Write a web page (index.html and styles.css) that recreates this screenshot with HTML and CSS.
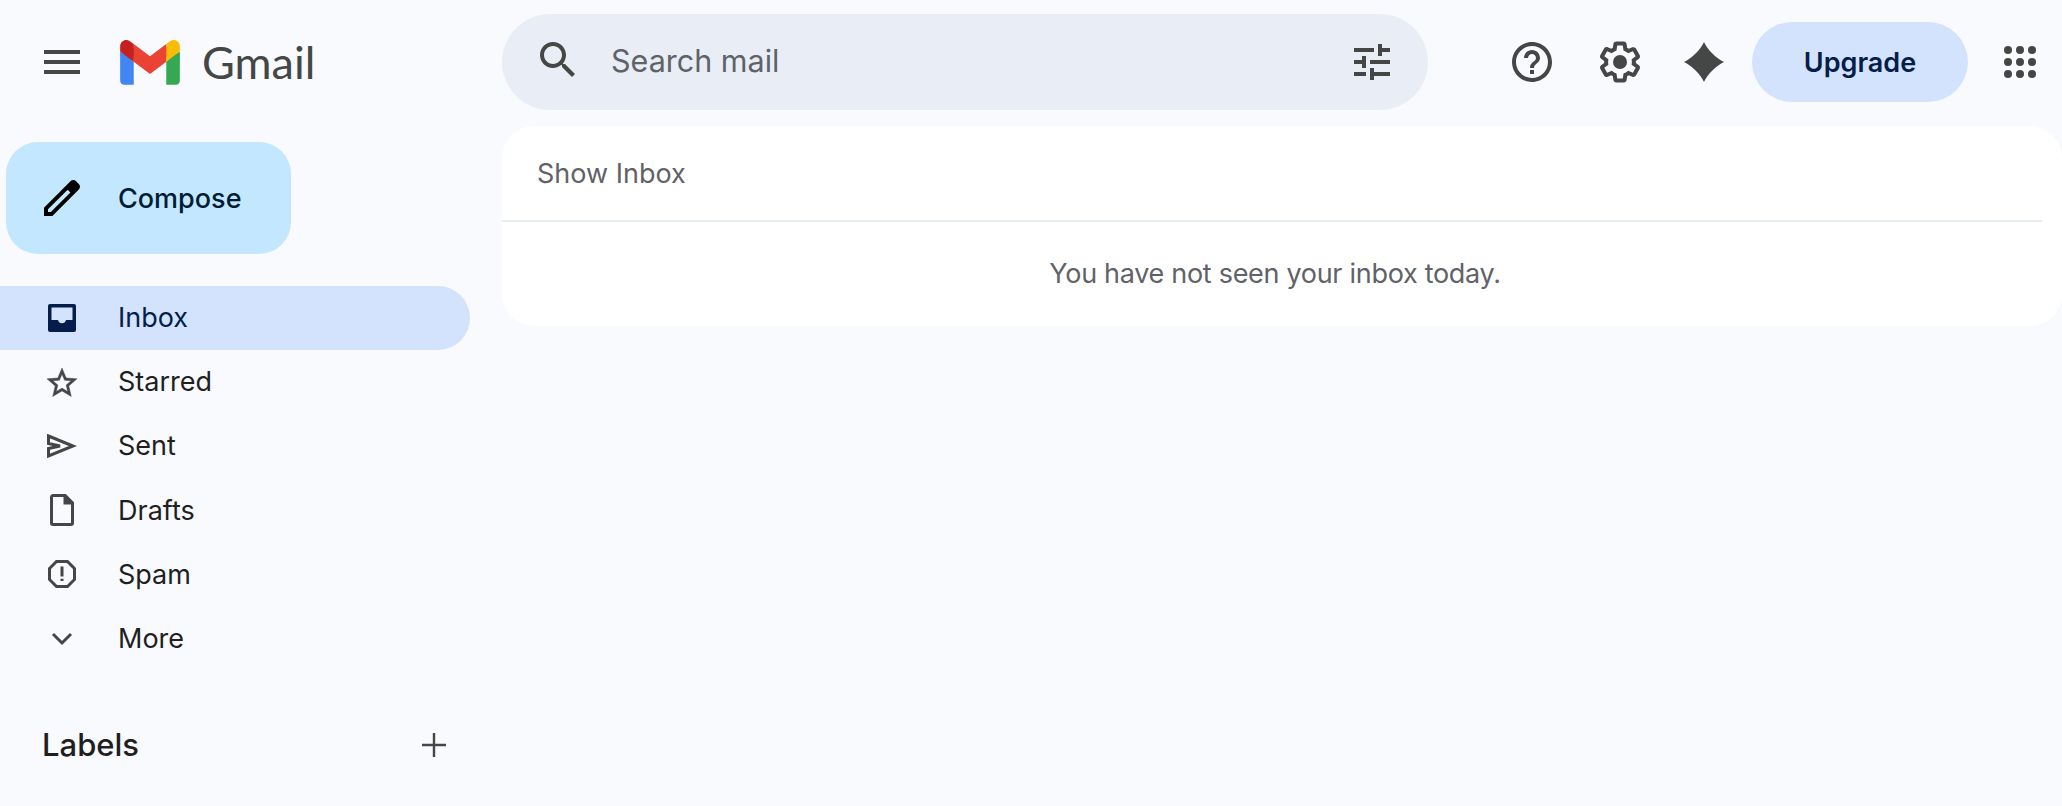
FILE: index.html
```html
<!DOCTYPE html>
<html lang="en">
<head>
  <meta charset="UTF-8" />
  <title>Inbox - Gmail</title>
  <link rel="stylesheet" href="styles.css">
</head>
<body>

<div class="app">
  <aside class="sidebar">
    <div class="brand">
      <svg class="menu-icon" viewBox="0 0 24 24"><path d="M3 18h18v-2H3v2zm0-5h18v-2H3v2zm0-7v2h18V6H3z"/></svg>
      <svg class="logo" viewBox="0 0 256 193">
        <path fill="#4285F4" d="M58.182 192.05V93.14L27.507 65.077 0 49.504v125.091c0 9.658 7.825 17.455 17.455 17.455h40.727Z"/>
        <path fill="#34A853" d="M197.818 192.05h40.727c9.659 0 17.455-7.826 17.455-17.455V49.505l-31.156 17.837-27.026 25.798v98.91Z"/>
        <path fill="#EA4335" d="m58.182 93.14-4.174-38.647 4.174-36.989L128 69.868l69.818-52.364 4.669 34.992-4.669 40.644L128 145.504z"/>
        <path fill="#FBBC04" d="M197.818 17.504V93.14L256 49.504V26.231c0-21.585-24.64-33.89-41.89-20.945l-16.292 12.218Z"/>
        <path fill="#C5221F" d="m0 49.504 26.759 20.07L58.182 93.14V17.504L41.89 5.286C24.61-7.66 0 4.646 0 26.23v23.273Z"/>
      </svg>
      <span class="logo-text">Gmail</span>
    </div>

    <button class="compose" type="button">
      <svg class="compose-icon" viewBox="0 0 24 24"><path d="M20.41 4.94l-1.35-1.35c-.78-.78-2.05-.78-2.83 0L3 16.82V21h4.18L20.41 7.77c.79-.78.79-2.05 0-2.83zm-14 14.12L5 19v-1.36l9.82-9.82 1.41 1.41-9.82 9.83z"/></svg>
      Compose
    </button>

    <nav class="nav">
      <a class="nav-row active">
        <span class="nav-slot">
          <svg width="28" height="28" viewBox="0 0 28 28"><path fill="#041e49" fill-rule="evenodd" d="M2 0h24a2 2 0 0 1 2 2v24a2 2 0 0 1-2 2H2a2 2 0 0 1-2-2V2a2 2 0 0 1 2-2zm1.500 3.500v12.500h6.500c.6 2.200 2 3.300 4 3.300s3.400-1.100 4-3.300h6.500V3.500z"/></svg>
        </span>
        Inbox
      </a>
      <a class="nav-row">
        <span class="nav-slot">
          <svg class="nav-star" viewBox="0 0 24 24"><path d="M22 9.240l-7.190-.62L12 2 9.190 8.630 2 9.240l5.460 4.730L5.820 21 12 17.270 18.180 21l-1.630-7.030L22 9.240zM12 15.400l-3.760 2.270 1-4.280-3.320-2.880 4.380-.38L12 6.100l1.710 4.040 4.380.38-3.320 2.880 1 4.280L12 15.400z"/></svg>
        </span>
        Starred
      </a>
      <a class="nav-row">
        <span class="nav-slot">
          <svg class="line-icon" width="30" height="24" viewBox="0 0 30 24"><path d="M1.500 2 L26 12 L1.500 22 V14.500 L13 12 L1.500 9.500 Z"/></svg>
        </span>
        Sent
      </a>
      <a class="nav-row">
        <span class="nav-slot">
          <svg class="line-icon" width="24" height="32" viewBox="0 0 24 32">
            <path d="M3 1.500H15L22.500 9V29a1.500 1.500 0 0 1-1.500 1.500H3A1.500 1.500 0 0 1 1.500 29V3A1.500 1.500 0 0 1 3 1.500z"/>
            <path class="fold" d="M15 1.500V9H22.500z"/>
          </svg>
        </span>
        Drafts
      </a>
      <a class="nav-row">
        <span class="nav-slot">
          <svg class="line-icon" width="28" height="28" viewBox="0 0 28 28">
            <path d="M8.500 1.500H19.500L26.500 8.500V19.500L19.500 26.500H8.500L1.500 19.500V8.500z"/>
            <path class="mark" d="M14 6.500V16.500M14 18.800V21"/>
          </svg>
        </span>
        Spam
      </a>
      <a class="nav-row">
        <span class="nav-slot">
          <svg class="line-icon" width="22" height="14" viewBox="0 0 22 14"><path d="M2 2 L11 11 L20 2"/></svg>
        </span>
        More
      </a>
    </nav>

    <div class="labels">
      <span>Labels</span>
      <svg class="plus" width="24" height="24" viewBox="0 0 24 24"><path d="M12 0V24M0 12H24"/></svg>
    </div>
  </aside>

  <main class="content">
    <header class="topbar">
      <div class="search">
        <svg class="search-icon" viewBox="0 0 24 24"><path d="M15.500 14h-.79l-.28-.27C15.410 12.590 16 11.110 16 9.500 16 5.910 13.090 3 9.500 3S3 5.910 3 9.500 5.910 16 9.500 16c1.610 0 3.090-.59 4.230-1.570l.27.28v.79l5 4.990L20.490 19l-4.990-5zm-6 0C7.010 14 5 11.990 5 9.500S7.010 5 9.500 5 14 7.010 14 9.500 11.990 14 9.500 14z"/></svg>
        <span class="search-text">Search mail</span>
        <svg class="tune-icon" viewBox="0 0 24 24"><path d="M3 17v2h6v-2H3zM3 5v2h10V5H3zm10 16v-2h8v-2h-8v-2h-2v6h2zM7 9v2H3v2h4v2h2V9H7zm14 4v-2H11v2h10zm-6-4h2V7h4V5h-4V3h-2v6z"/></svg>
      </div>
      <div class="actions">
        <svg class="action-icon help" viewBox="0 0 24 24"><path d="M11 18h2v-2h-2v2zm1-16C6.480 2 2 6.480 2 12s4.480 10 10 10 10-4.480 10-10S17.520 2 12 2zm0 18c-4.410 0-8-3.590-8-8s3.590-8 8-8 8 3.590 8 8-3.590 8-8 8zm0-14c-2.210 0-4 1.790-4 4h2c0-1.100.9-2 2-2s2 .9 2 2c0 2-3 1.750-3 5h2c0-2.250 3-2.500 3-5 0-2.210-1.790-4-4-4z"/></svg>
        <svg class="action-icon gear" viewBox="0 0 24 24"><path d="M13.850 22.250h-3.700c-.74 0-1.360-.54-1.450-1.270l-.27-1.890c-.27-.14-.53-.29-.79-.46l-1.800.72c-.7.260-1.470-.03-1.810-.65L2.200 15.530c-.35-.66-.2-1.440.36-1.880l1.530-1.190c-.01-.15-.02-.3-.02-.46 0-.15.01-.31.02-.46l-1.520-1.190c-.59-.45-.74-1.260-.37-1.880l1.850-3.190c.34-.62 1.110-.9 1.790-.63l1.810.73c.26-.17.520-.32.780-.46l.27-1.910c.09-.7.710-1.250 1.440-1.250h3.700c.74 0 1.360.54 1.450 1.270l.27 1.890c.27.140.53.290.79.460l1.800-.72c.71-.26 1.480.03 1.820.65l1.840 3.180c.36.660.2 1.440-.36 1.880l-1.520 1.190c.01.150.02.3.02.46s-.01.31-.02.46l1.520 1.190c.56.450.72 1.230.37 1.860l-1.860 3.220c-.34.62-1.110.9-1.800.63l-1.800-.72c-.26.170-.52.320-.78.460l-.27 1.910c-.1.680-.72 1.220-1.450 1.220zm-3.230-2h2.760l.37-2.550.53-.22c.44-.18.880-.44 1.340-.78l.45-.34 2.380.96 1.380-2.400-2.030-1.580.07-.56c.03-.26.06-.51.06-.78s-.03-.53-.06-.78l-.07-.56 2.030-1.580-1.390-2.400-2.390.96-.45-.35c-.42-.32-.87-.58-1.330-.77l-.52-.22-.37-2.550h-2.760l-.37 2.550-.53.21c-.44.190-.88.440-1.340.790l-.45.330-2.380-.95-1.390 2.390 2.030 1.580-.07.56a7 7 0 0 0-.06.790c0 .260.020.530.060.780l.07.56-2.030 1.580 1.380 2.400 2.390-.96.45.35c.43.33.86.58 1.330.77l.53.22.38 2.550z"/><circle cx="12" cy="12" r="3.500"/></svg>
        <svg class="action-icon spark" viewBox="0 0 24 24"><path d="M12 2C13.500 5.600 18.400 10.500 22 12 18.400 13.500 13.500 18.400 12 22 10.500 18.400 5.600 13.500 2 12 5.600 10.500 10.500 5.600 12 2z"/></svg>
        <button class="upgrade" type="button">Upgrade</button>
        <svg class="action-icon apps" viewBox="0 0 24 24">
          <circle cx="6" cy="6" r="2"/><circle cx="12" cy="6" r="2"/><circle cx="18" cy="6" r="2"/>
          <circle cx="6" cy="12" r="2"/><circle cx="12" cy="12" r="2"/><circle cx="18" cy="12" r="2"/>
          <circle cx="6" cy="18" r="2"/><circle cx="12" cy="18" r="2"/><circle cx="18" cy="18" r="2"/>
        </svg>
      </div>
    </header>

    <section class="card">
      <div class="card-head">Show Inbox</div>
      <div class="card-empty">You have not seen your inbox today.</div>
    </section>
  </main>
</div>

</body>
</html>
```

FILE: styles.css
```css
body {
  margin: 0;
  background-color: #f8fafd;
  color: #1f1f1f;
  font-family: Inter, Roboto, sans-serif;
}
svg {
  display: block;
  fill: #444746;
  flex: none;
}
button {
  border: none;
  cursor: pointer;
  font-family: inherit;
}
.app {
  display: grid;
  grid-template-columns: 502px 1fr;
  height: 806px;
  overflow: hidden;
}

/* left column */
.brand {
  display: flex;
  align-items: center;
  height: 124px;
  padding-left: 38px;
}
.menu-icon {
  width: 48px;
  height: 48px;
}
.logo {
  width: 60px;
  height: 45px;
  margin-left: 34px;
}
.logo-text {
  margin-left: 22px;
  font-family: Lato, sans-serif;
  font-size: 45px;
  color: #444746;
}
.compose {
  display: flex;
  align-items: center;
  width: 285px;
  height: 112px;
  margin: 18px 0 0 6px;
  padding: 0 0 0 32px;
  border-radius: 32px;
  background: #c2e7ff;
  color: #001d35;
  font-size: 27px;
  font-weight: 500;
}
.compose-icon {
  width: 48px;
  height: 48px;
  margin-right: 32px;
  fill: #000;
}
.nav {
  margin-top: 32px;
}
.nav-row {
  display: flex;
  align-items: center;
  box-sizing: border-box;
  width: 470px;
  height: 64.2px;
  padding-bottom: 1px;
  border-radius: 0 32px 32px 0;
  font-size: 27px;
  color: #1f1f1f;
}
.nav-row.active {
  background: #d3e3fd;
  color: #041e49;
}
.nav-slot {
  display: flex;
  justify-content: center;
  align-items: center;
  width: 48px;
  margin-left: 38px;
  margin-right: 32px;
}
.nav-star {
  width: 36px;
  height: 36px;
  margin-top: 2px;
  stroke: #444746;
  stroke-width: 0.3;
}
.line-icon path {
  fill: none;
  stroke: #444746;
  stroke-width: 3;
}
.line-icon .fold {
  fill: #444746;
}
.labels {
  display: flex;
  justify-content: space-between;
  align-items: center;
  width: 404px;
  margin: 55px 0 0 42px;
  font-size: 31px;
  font-weight: 500;
  color: #1f1f1f;
}
.plus path {
  fill: none;
  stroke: #444746;
  stroke-width: 2.4;
}

/* top bar and card */
.content {
  padding-top: 14px;
}
.topbar {
  display: flex;
  align-items: center;
  height: 96px;
}
.search {
  display: flex;
  align-items: center;
  width: 926px;
  height: 96px;
  flex: none;
  border-radius: 48px;
  background: #e9eef6;
}
.search-icon {
  width: 48px;
  height: 48px;
  margin-left: 32px;
  margin-top: -4px;
}
.search-text {
  flex: 1;
  margin-left: 29px;
  margin-bottom: 3px;
  font-size: 30.5px;
  color: #5f6368;
}
.tune-icon {
  width: 48px;
  height: 48px;
  margin-right: 32px;
}
.actions {
  display: flex;
  align-items: center;
}
.action-icon {
  width: 48px;
  height: 48px;
}
.help {
  margin-left: 80px;
}
.gear {
  margin-left: 40px;
}
.spark {
  margin-left: 36px;
}
.apps {
  margin-left: 28px;
}
.upgrade {
  width: 216px;
  height: 80px;
  margin-left: 24px;
  border-radius: 40px;
  background: #d3e3fd;
  color: #041e49;
  font-size: 27px;
  font-weight: 600;
}
.card {
  height: 200px;
  margin-top: 16px;
  border-radius: 32px;
  background: #fff;
}
.card-head {
  height: 94px;
  margin-right: 20px;
  padding-left: 35px;
  line-height: 96px;
  border-bottom: 2px solid #e8eef2;
  font-size: 27px;
  color: #5f6368;
}
.card-empty {
  height: 104px;
  margin-right: 20px;
  padding-left: 6px;
  line-height: 104px;
  text-align: center;
  font-size: 27px;
  letter-spacing: -0.3px;
  color: #5f6368;
}
```
